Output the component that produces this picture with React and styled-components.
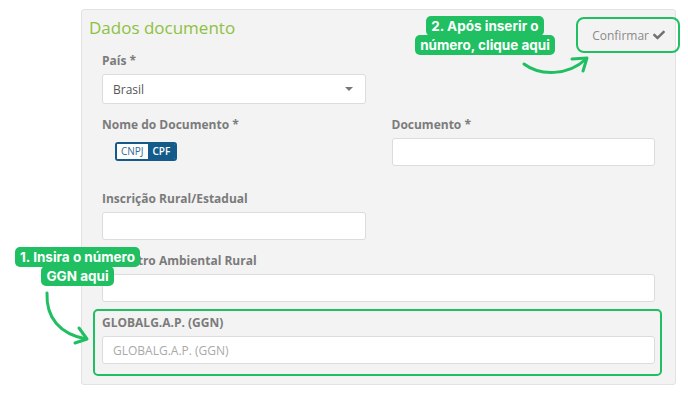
import React from 'react';
import styled, { createGlobalStyle } from 'styled-components';
import { FaCheck } from 'react-icons/fa';

const GlobalStyle = createGlobalStyle`
  html, body {
    margin: 0;
    padding: 0;
    background: #ffffff;
    font-family: "Open Sans", "Noto Sans", sans-serif;
  }
  * {
    box-sizing: border-box;
  }
`;

const GREEN = '#1fbf62';

const Page = styled.div`
  position: relative;
  width: 688px;
  height: 395px;
  padding: 9px 0 0 81px;
  overflow: hidden;
`;

const Panel = styled.section`
  width: 595px;
  background: #f3f3f3;
  border: 1px solid #e2e2e2;
  border-radius: 3px;
`;

const Header = styled.div`
  display: flex;
  justify-content: space-between;
  align-items: flex-start;
  padding: 6px 0 0 7px;
`;

const Title = styled.h2`
  margin: 0;
  font-size: 17px;
  line-height: 24px;
  font-weight: 400;
  color: #8dc13f;
`;

const ConfirmButton = styled.button`
  margin-top: 6px;
  height: 26px;
  display: flex;
  align-items: center;
  gap: 4px;
  padding: 0 10px 0 11px;
  background: #f3f3f3;
  border: none;
  border-radius: 3px;
  outline: 2px solid ${GREEN};
  outline-offset: 3px;
  font-family: inherit;
  font-size: 12px;
  color: #8a8a8a;
  svg {
    color: #707070;
    width: 12px;
    height: 12px;
  }
`;

const Body = styled.div`
  display: grid;
  grid-template-columns: 1fr 1fr;
  column-gap: 26px;
  row-gap: 12px;
  padding: 4px 20px 8px;
`;

const Field = styled.div`
  grid-column: ${(p) => (p.$wide ? '1 / -1' : 'auto')};
  margin-bottom: ${(p) => p.$mb || 0}px;
`;

const Label = styled.label`
  display: block;
  margin-bottom: 4px;
  font-size: 12px;
  line-height: 18px;
  font-weight: 700;
  color: #7b7b7b;
`;

const Input = styled.div`
  height: ${(p) => p.$h || 28}px;
  display: flex;
  align-items: center;
  justify-content: space-between;
  padding: 0 12px 0 10px;
  background: #fff;
  border: 1px solid #dcdcdc;
  border-radius: 3px;
  font-size: 12px;
  color: ${(p) => (p.$placeholder ? '#a9a9a9' : '#555')};
`;

const Caret = styled.span`
  width: 0;
  height: 0;
  border-left: 4px solid transparent;
  border-right: 4px solid transparent;
  border-top: 4px solid #777;
`;

const Toggle = styled.div`
  display: inline-flex;
  margin-left: 13px;
  height: 19px;
  border: 2px solid #155b8a;
  border-radius: 3px;
  overflow: hidden;
`;

const ToggleOption = styled.span`
  display: flex;
  align-items: center;
  padding: ${(p) => (p.$active ? '0 5px 0 5px' : '0 4px')};
  font-size: 10px;
  background: ${(p) => (p.$active ? '#155b8a' : '#fff')};
  color: ${(p) => (p.$active ? '#fff' : '#2f6d99')};
  font-weight: ${(p) => (p.$active ? 600 : 400)};
`;

const Highlight = styled.div`
  grid-column: 1 / -1;
  margin: -5px -7px 0 -9px;
  padding: 3px 5px 10px 7px;
  border: 2px solid ${GREEN};
  border-radius: 5px;
`;

const Callout = styled.div`
  position: absolute;
  left: ${(p) => p.$x}px;
  top: ${(p) => p.$y}px;
  width: ${(p) => p.$w}px;
  text-align: center;
  font-family: "Inter", "Noto Sans", sans-serif;
  font-size: 13.5px;
  font-weight: 700;
  line-height: 19px;
  color: #fff;
  span {
    background: ${GREEN};
    padding: 2px 5px;
    border-radius: 5px;
    box-decoration-break: clone;
    -webkit-box-decoration-break: clone;
  }
`;

const Arrow = styled.svg`
  position: absolute;
  left: 0;
  top: 0;
  pointer-events: none;
`;

export default function App() {
  return (
    <>
      <GlobalStyle />
      <Page>
        <Panel>
          <Header>
            <Title>Dados documento</Title>
            <ConfirmButton>
              Confirmar <FaCheck />
            </ConfirmButton>
          </Header>
          <Body>
            <Field>
              <Label>País *</Label>
              <Input $h={30}>
                Brasil
                <Caret />
              </Input>
            </Field>
            <Field />
            <Field $mb={12}>
              <Label>Nome do Documento *</Label>
              <Toggle>
                <ToggleOption>CNPJ</ToggleOption>
                <ToggleOption $active>CPF</ToggleOption>
              </Toggle>
            </Field>
            <Field $mb={12}>
              <Label>Documento *</Label>
              <Input />
            </Field>
            <Field>
              <Label>Inscrição Rural/Estadual</Label>
              <Input />
            </Field>
            <Field />
            <Field $wide>
              <Label>Cadastro Ambiental Rural</Label>
              <Input />
            </Field>
            <Highlight>
              <Label>GLOBALG.A.P. (GGN)</Label>
              <Input $placeholder>GLOBALG.A.P. (GGN)</Input>
            </Highlight>
          </Body>
        </Panel>

        <Callout $x={400} $y={17} $w={170}>
          <span>
            2. Após inserir o<br />
            número, clique aqui
          </span>
        </Callout>
        <Callout $x={0} $y={248} $w={155}>
          <span>
            1. Insira o número<br />
            GGN aqui
          </span>
        </Callout>

        <Arrow width="688" height="395" viewBox="0 0 688 395">
          <g fill="none" stroke={GREEN} strokeWidth="3" strokeLinecap="round" strokeLinejoin="round">
            <path d="M524 64 C 540 76, 568 76, 586 59" />
            <path d="M572 59 L587 58 L583 71" />
            <path d="M47 293 C 46 318, 60 334, 86 339" />
            <path d="M79 328 L87 339 L75 343" />
          </g>
        </Arrow>
      </Page>
    </>
  );
}
